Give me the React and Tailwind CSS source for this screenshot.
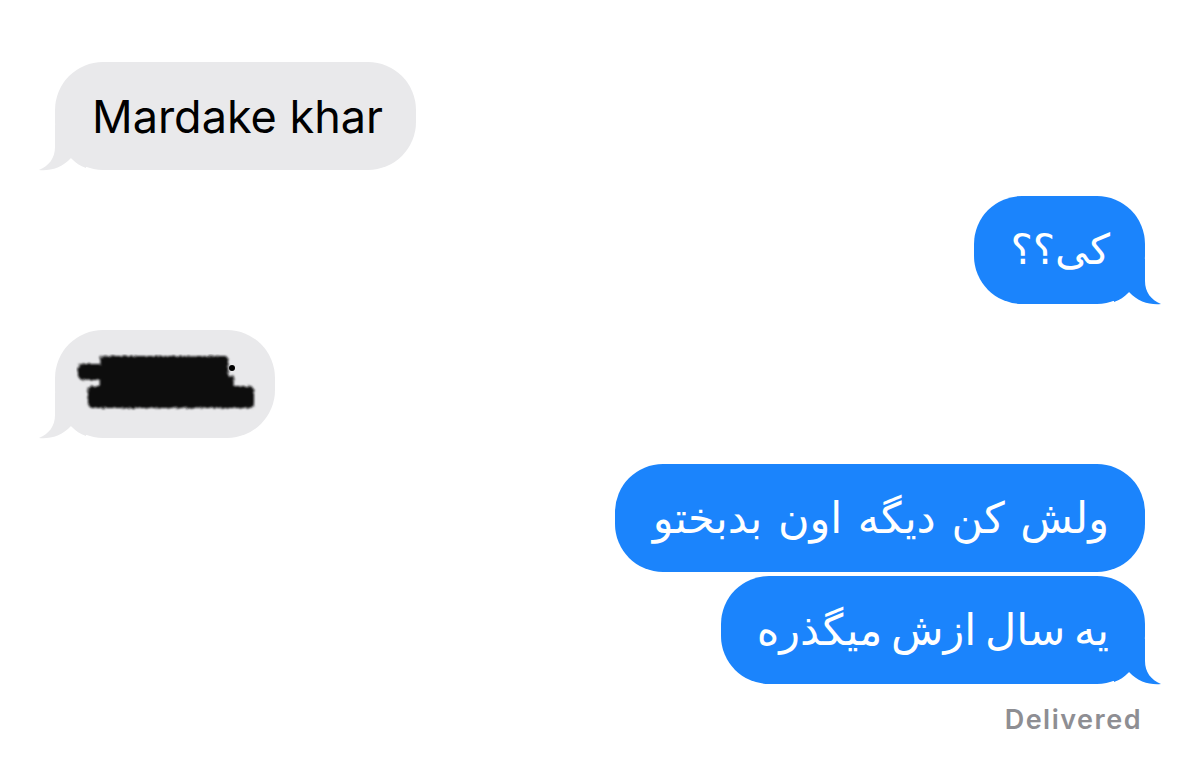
import React from "react";

const latin = { fontFamily: "Inter, 'Liberation Sans', sans-serif" };
const persian = { fontFamily: "'DejaVu Sans', 'Noto Sans', sans-serif" };

function Tail({ side, color }) {
  // tail drawn for the right side; mirrored for incoming bubbles
  return (
    <svg
      width="48"
      height="46"
      viewBox="0 0 48 46"
      className={
        side === "right"
          ? "absolute bottom-[-1px] right-[-17px]"
          : "absolute bottom-[-1px] left-[-17px] -scale-x-100"
      }
    >
      <path
        d="M0 0 L31 0 L31 22 C31 33 37 41 47 45 C36 46 24 43 15 33 C10 38 6 41 0 43 Z"
        fill={color}
      />
    </svg>
  );
}

function Bubble({ side = "left", tail = false, className = "", children }) {
  const isRight = side === "right";
  const color = isRight ? "#1b84fc" : "#e9e9eb";
  return (
    <div
      className={`relative rounded-[48px] h-[108px] flex items-center ${
        isRight ? "bg-[#1b84fc] text-white self-end" : "bg-[#e9e9eb] text-black self-start"
      } ${className}`}
    >
      {tail && <Tail side={side} color={color} />}
      <div className="relative">{children}</div>
    </div>
  );
}

function Redacted() {
  return (
    <svg width="182" height="60" viewBox="0 0 182 60" className="block">
      <defs>
        <filter id="scribble" x="-10%" y="-20%" width="120%" height="140%">
          <feTurbulence type="fractalNoise" baseFrequency="1.1" numOctaves="2" seed="5" />
          <feDisplacementMap in="SourceGraphic" scale="4" />
          <feGaussianBlur stdDeviation="0.8" />
        </filter>
      </defs>
      <g filter="url(#scribble)" fill="#111">
        <rect x="24" y="2" width="128" height="37" rx="4" />
        <rect x="2" y="10" width="30" height="16" rx="5" />
        <rect x="12" y="32" width="166" height="22" rx="5" />
        <rect x="150" y="22" width="8" height="16" />
      </g>
      <circle cx="156" cy="14" r="3" fill="#000" />
    </svg>
  );
}

export default function App() {
  return (
    <div className="w-[1200px] h-[765px] bg-white overflow-hidden">
      <div className="flex flex-col pt-[62px] pl-[55px] pr-[55px]">
        <Bubble side="left" tail className="pl-[37px] pr-[33px]">
          <span className="text-[45px] leading-none" style={latin}>
            Mardake khar
          </span>
        </Bubble>

        <Bubble side="right" tail className="mt-[26px] pl-[36px] pr-[35px]">
          <span dir="rtl" className="text-[42px] leading-none" style={persian}>
            کی؟؟
          </span>
        </Bubble>

        <Bubble side="left" tail className="mt-[26px] pl-[21px] pr-[17px]">
          <Redacted />
        </Bubble>

        <Bubble side="right" className="mt-[26px] pl-[38px] pr-[36px]">
          <span dir="rtl" className="text-[43px] leading-none [word-spacing:2px]" style={persian}>
            ولش کن دیگه اون بدبختو
          </span>
        </Bubble>

        <Bubble side="right" tail className="mt-[4px] pl-[36px] pr-[36px]">
          <span dir="rtl" className="text-[43px] leading-none [word-spacing:-5px]" style={persian}>
            یه سال ازش میگذره
          </span>
        </Bubble>

        <div
          className="self-end mt-[16px] pr-[3px] text-[27px] font-semibold text-[#8e8e93] tracking-[1.5px]"
          style={latin}
        >
          Delivered
        </div>
      </div>
    </div>
  );
}
